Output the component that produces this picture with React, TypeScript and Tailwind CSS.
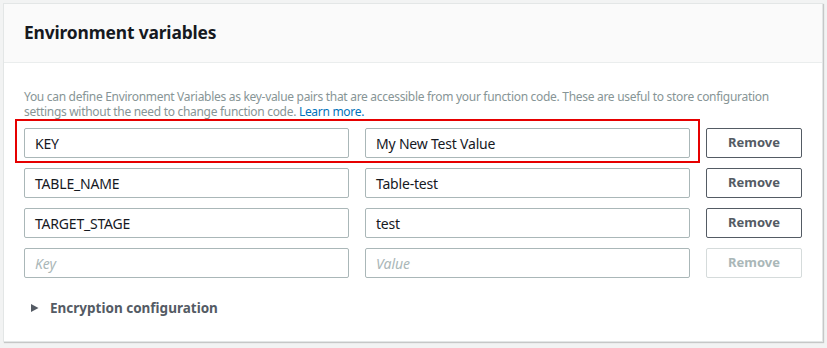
import React from "react";

const rows = [
  { k: "KEY", v: "My New Test Value", hl: true },
  { k: "TABLE_NAME", v: "Table-test" },
  { k: "TARGET_STAGE", v: "test" },
];

export default function App() {
  return (
    <div
      className="w-[827px] h-[348px] bg-[#f2f3f3] pt-[3px] pl-[3px] pr-[4px]"
      style={{ fontFamily: '"Noto Sans", "Open Sans", Arial, sans-serif' }}
    >
      <div className="h-[339px] bg-white border border-[#e3e6e6] shadow-[1px_1px_1px_rgba(0,0,0,0.18)] flex flex-col">
        <div className="h-[59px] bg-[#fafafa] border-b border-[#eaeded] flex items-center px-[20px]">
          <h2 className="text-[17.4px] font-bold text-[#16191f] tracking-[-0.15px] -mt-[1px]">Environment variables</h2>
        </div>
        <div className="px-[20px] pt-[26px]">
          <p className="text-[12px] leading-[15px] text-[#879596] tracking-[-0.3px]">
            You can define Environment Variables as key-value pairs that are accessible from your function code. These are useful to store configuration settings without the need to change function code.{" "}
            <span className="text-[#0073bb]">Learn more.</span>
          </p>
          <div className="mt-[9px] flex flex-col gap-[10px]">
            {rows.map((r) => (
              <div key={r.k} className="relative grid grid-cols-[1fr_1fr_96px] gap-[16px]">
                {r.hl && (
                  <div className="absolute left-[-9px] top-[-9px] w-[685px] h-[44px] border-[2px] border-[#e60000] pointer-events-none" />
                )}
                <div className="h-[30px] border border-[#aab7b8] rounded-[2px] flex items-center px-[10px] text-[14px] tracking-[-0.2px] text-[#16191f]">
                  {r.k}
                </div>
                <div className="h-[30px] border border-[#aab7b8] rounded-[2px] flex items-center px-[10px] text-[14px] tracking-[-0.2px] text-[#16191f]">
                  {r.v}
                </div>
                <div className="h-[30px] border border-[#545b64] rounded-[2px] flex items-center justify-center text-[13px] font-bold text-[#545b64]">
                  Remove
                </div>
              </div>
            ))}
            <div className="grid grid-cols-[1fr_1fr_96px] gap-[16px]">
              <div className="h-[30px] border border-[#aab7b8] rounded-[2px] flex items-center px-[10px] text-[14px] italic text-[#aab7b8]">
                Key
              </div>
              <div className="h-[30px] border border-[#aab7b8] rounded-[2px] flex items-center px-[10px] text-[14px] italic text-[#aab7b8]">
                Value
              </div>
              <div className="h-[30px] border border-[#d5dbdb] rounded-[2px] flex items-center justify-center text-[13px] font-bold text-[#aab7b8]">
                Remove
              </div>
            </div>
          </div>
          <div className="mt-[20px] flex items-center pl-[7px]">
            <svg width="8" height="10" viewBox="0 0 8 10" className="mr-[11px]">
              <polygon points="0,1 7.5,5 0,9" fill="#545b64" />
            </svg>
            <span className="text-[13.5px] font-bold text-[#545b64]">Encryption configuration</span>
          </div>
        </div>
      </div>
    </div>
  );
}
